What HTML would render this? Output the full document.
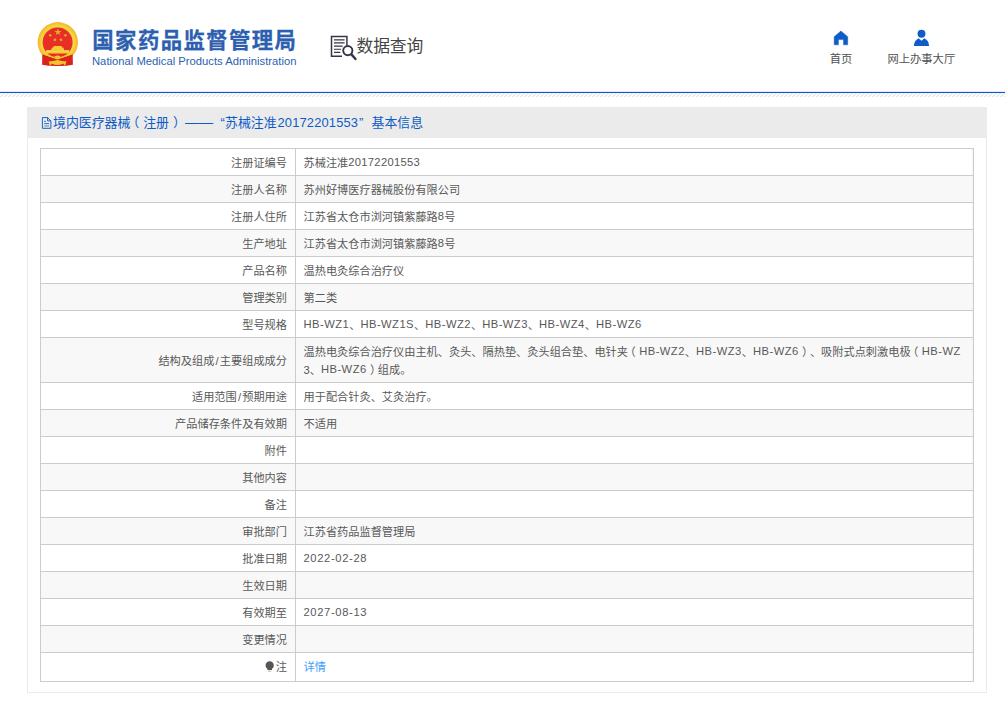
<!DOCTYPE html>
<html lang="zh-CN">
<head>
<meta charset="utf-8">
<title>国家药品监督管理局 数据查询</title>
<style>
html,body{margin:0;padding:0;background:#fff;}
body{width:1005px;height:705px;position:relative;overflow:hidden;
  font-family:"Liberation Sans","Noto Sans CJK SC",sans-serif;color:#333;text-spacing-trim:space-all;}
.abs{position:absolute;}
#hdr{position:absolute;left:0;top:0;width:1005px;height:92px;background:#fff;}
#blueline{position:absolute;left:0;top:92px;width:1005px;height:1px;background:#0c5dc2;box-shadow:0 -1px 0 rgba(12,93,194,0.12);}
#hatch{position:absolute;left:0;top:93px;width:1005px;height:4px;
  background:repeating-linear-gradient(135deg,#e8e8e8 0,#e8e8e8 0.9px,#fff 0.9px,#fff 2.828px);}
#cn{left:92.3px;top:23.5px;font-size:21.4px;font-weight:700;color:#2d5fb0;line-height:34px;white-space:nowrap;letter-spacing:1.4px;-webkit-text-stroke:0.3px #2d5fb0;}
#en{left:92px;top:54px;font-size:11.25px;color:#2d5fb0;line-height:14px;white-space:nowrap;}
#q{left:356.5px;top:34px;font-size:16.8px;color:#444;line-height:26px;white-space:nowrap;letter-spacing:-0.15px;}
.nav{font-size:11.3px;color:#505050;line-height:14px;white-space:nowrap;text-align:center;}
#panel{position:absolute;left:27px;top:107px;width:958px;height:585px;border:1px solid #eaeaea;border-top:none;box-sizing:content-box;}
#ptitle{position:absolute;left:27px;top:107px;width:960px;height:31px;background:#ebebeb;}
#ptxt{left:53px;top:114px;font-size:12.9px;color:#0d5bc6;line-height:18px;white-space:nowrap;width:400px;height:18px;}
#ptxt .t{position:absolute;top:0;white-space:nowrap;}
table{position:absolute;left:40px;top:148px;width:934px;border-collapse:collapse;table-layout:fixed;
  font-family:"Liberation Sans","Noto Sans CJK SC",sans-serif;font-size:11.2px;color:#585858;}
td{border:1px solid #ccc;height:27px;padding:1px 8px 0;line-height:18px;vertical-align:middle;box-sizing:border-box;}
td.l{width:255px;text-align:right;padding-right:8px;}
td.v{text-align:left;padding-left:7.5px;}
tr:nth-child(even) td{background:#f8f8f8;}
a{color:#409eff;text-decoration:none;}
tr.last td{padding-top:0;padding-bottom:1px;}
.sl{padding:0 1.2px;}
td.v{box-shadow:inset -1px 0 0 #f3f5fd;}
tr.last td.l{padding-right:8px;}
.h{letter-spacing:0.47px;position:relative;top:-1px;}
.pl{position:relative;left:-0.3em;}
.pr{position:relative;left:0.3em;}
.d{font-family:"Liberation Sans","Noto Sans CJK SC",sans-serif;letter-spacing:0.3px;position:relative;top:-1px;}
.dt{font-family:"Liberation Sans","Noto Sans CJK SC",sans-serif;letter-spacing:0.64px;position:relative;top:-1px;}
</style>
</head>
<body>
<div id="hdr">
  <svg class="abs" style="left:30px;top:16px" width="54" height="58" viewBox="30 16 54 58">
    <defs>
      <radialGradient id="rg" cx="57.8" cy="42.3" r="20.3" gradientUnits="userSpaceOnUse">
        <stop offset="0.72" stop-color="#e9c431"/><stop offset="0.78" stop-color="#f8d84a"/><stop offset="0.9" stop-color="#f5c530"/><stop offset="1" stop-color="#f2b52c"/>
      </radialGradient>
    </defs>
    <circle cx="57.8" cy="42.3" r="20.2" fill="url(#rg)"/>
    <path d="M42.3 54.3 L42.1 64.8 Q49 66.300 57.5 66.100 Q66 66.300 72.9 64.8 L72.700 54.3 Q57.5 61 42.3 54.3 Z" fill="#d9241b"/>
    <circle cx="57.6" cy="42.4" r="14.9" fill="#e92e26"/>
    <path d="M43.2 53.6 Q50 56.300 57.5 58.9 Q65 56.300 72 53.6" fill="none" stroke="#f3c52e" stroke-width="1.4"/>
    <path d="M54 57.600 Q54.5 55.6 57.5 55.5 Q60.5 55.6 61 57.600 Q59 58.6 57.5 58.400 Q56 58.6 54 57.600 Z" fill="#f3c52e"/>
    <path d="M48.7 61.5 Q53 61.400 57.5 60 Q62 61.400 66.6 61.5 L64.9 65.7 L63.1 63.4 L60.5 64.7 L57.5 65.1 L54.4 64.7 L51.8 63.4 L50 65.7 Z" fill="#f2c32e"/>
    <polygon points="57.90,28.40 58.77,30.90 61.42,30.96 59.31,32.56 60.07,35.09 57.90,33.58 55.73,35.09 56.49,32.56 54.38,30.96 57.03,30.90" fill="#d9b52a"/>
    <polygon points="51.15,33.65 51.02,34.93 52.06,35.70 50.80,35.97 50.40,37.19 49.75,36.08 48.46,36.07 49.32,35.11 48.93,33.89 50.11,34.40" fill="#dcb92b"/>
    <polygon points="64.45,33.65 65.49,34.40 66.67,33.89 66.28,35.11 67.14,36.07 65.85,36.08 65.20,37.19 64.80,35.97 63.54,35.70 64.58,34.93" fill="#dcb92b"/>
    <polygon points="55.39,37.96 55.60,39.23 56.80,39.70 55.65,40.29 55.58,41.57 54.67,40.67 53.42,41.00 54.00,39.85 53.31,38.77 54.58,38.96" fill="#dcb92b"/>
    <polygon points="60.51,37.96 61.32,38.96 62.59,38.77 61.90,39.85 62.48,41.00 61.23,40.67 60.32,41.57 60.25,40.29 59.10,39.70 60.30,39.23" fill="#dcb92b"/>
    <path d="M53.2 47.4 Q53.6 46.2 54.2 45.9 H61.2 Q61.8 46.2 62.2 47.4 H63.2 Q63.8 47.9 64.1 50.1 H69.1 L69.4 53.4 H46 L46.3 50.1 H51.2 Q51.500 47.900 52.200 47.400 Z" fill="#f6cb35"/>
    <path d="M46.200 51.300 H69.200" stroke="#f9de5a" stroke-width="0.7"/>
  </svg>
  <div id="cn" class="abs">国家药品监督管理局</div>
  <div id="en" class="abs">National Medical Products Administration</div>

  <svg class="abs" style="left:328px;top:32px" width="32" height="32" viewBox="328 32 32 32">
    <g fill="none" stroke="#35354a">
      <path d="M346.9 45.600 V36.500 H331.500 V56.300 H342" stroke-width="1.5"/>
      <path d="M334 39.9 H344.6 M334 42.9 H344.6 M334 46.100 H342.6 M334 49.200 H341 M334 52.400 H340.300" stroke-width="1.1"/>
      <circle cx="347.8" cy="50.600" r="4.6" stroke-width="1.9" fill="#fff"/>
      <path d="M351.400 54.400 L355.500 59" stroke-width="2.4" stroke-linecap="round"/>
    </g>
  </svg>
  <div id="q" class="abs">数据查询</div>

  <svg class="abs" style="left:832px;top:29px" width="18" height="18" viewBox="832 29 18 18">
    <path d="M840.9 31 L847.700 36.700 V44.800 H843.500 V39.6 H838.400 V44.800 H834.200 V36.700 Z" fill="#0f5cc8" stroke="#0f5cc8" stroke-width="0.5" stroke-linejoin="round"/>
  </svg>
  <div class="abs nav" style="left:811px;top:51.5px;width:60px;">首页</div>
  <svg class="abs" style="left:912px;top:28px" width="19" height="19" viewBox="912 28 19 19">
    <circle cx="921.5" cy="33.8" r="3.95" fill="#0f5cc8"/>
    <path d="M913.800 45.900 Q914.100 40.600 918.600 38.200 L921.500 40.700 L924.400 38.200 Q928.900 40.600 929.100 45.900 Z" fill="#0f5cc8"/>
  </svg>
  <div class="abs nav" style="left:871.3px;top:51.5px;width:100px;">网上办事大厅</div>
</div>
<div id="blueline"></div>
<div id="hatch"></div>

<div id="panel"></div>
<div id="ptitle"></div>
<svg class="abs" style="left:41px;top:116px" width="12" height="14" viewBox="0 0 12 14">
  <path d="M1.4 1.600 H6.600 L9.900 4.900 V12.300 H1.400 Z M6.600 1.600 V4.900 H9.900" fill="none" stroke="#0d5bc6" stroke-width="0.95"/>
  <path d="M3.200 5.300 H5 M3.200 7.600 H8.100" stroke="#0d5bc6" stroke-width="0.9"/>
  <path d="M3.200 9.200 H8.100 V10.600 H3.200 Z" fill="#7d9fd6"/>
</svg>
<div id="ptxt" class="abs"><span class="t" style="left:0">境内医疗器械<span class="pl">（</span>注册<span class="pr">）</span></span><span class="t" style="left:131.8px;transform:scaleX(1.09);transform-origin:0 0">——</span><span class="t" style="left:167.5px">“</span><span class="t" style="left:172px">苏械注准</span><span class="t" style="left:224.500px;letter-spacing:0.16px">20172201553</span><span class="t" style="left:306px">”</span><span class="t" style="left:318.5px">基本信息</span></div>

<table>
<tr><td class="l">注册证编号</td><td class="v">苏械注准<span class="d">20172201553</span></td></tr>
<tr><td class="l">注册人名称</td><td class="v">苏州好博医疗器械股份有限公司</td></tr>
<tr><td class="l">注册人住所</td><td class="v">江苏省太仓市浏河镇紫藤路<span class="d">8</span>号</td></tr>
<tr><td class="l">生产地址</td><td class="v">江苏省太仓市浏河镇紫藤路<span class="d">8</span>号</td></tr>
<tr><td class="l">产品名称</td><td class="v">温热电灸综合治疗仪</td></tr>
<tr><td class="l">管理类别</td><td class="v">第二类</td></tr>
<tr><td class="l">型号规格</td><td class="v"><span class="h">HB-WZ1</span>、<span class="h">HB-WZ1S</span>、<span class="h">HB-WZ2</span>、<span class="h">HB-WZ3</span>、<span class="h">HB-WZ4</span>、<span class="h">HB-WZ6</span></td></tr>
<tr style="height:45px"><td class="l">结构及组成<span class="sl">/</span>主要组成成分</td><td class="v">温热电灸综合治疗仪由主机、灸头、隔热垫、灸头组合垫、电针夹<span class="pl">（</span><span class="h">HB-WZ2</span>、<span class="h">HB-WZ3</span>、<span class="h">HB-WZ6</span><span class="pr">）</span>、吸附式点刺激电极<span class="pl">（</span><span class="h">HB-WZ</span><br>3、<span class="h">HB-WZ6</span><span class="pr">）</span>组成。</td></tr>
<tr><td class="l">适用范围<span class="sl">/</span>预期用途</td><td class="v">用于配合针灸、艾灸治疗。</td></tr>
<tr><td class="l">产品储存条件及有效期</td><td class="v">不适用</td></tr>
<tr><td class="l">附件</td><td class="v"></td></tr>
<tr><td class="l">其他内容</td><td class="v"></td></tr>
<tr><td class="l">备注</td><td class="v"></td></tr>
<tr><td class="l">审批部门</td><td class="v">江苏省药品监督管理局</td></tr>
<tr><td class="l">批准日期</td><td class="v"><span class="dt">2022-02-28</span></td></tr>
<tr><td class="l">生效日期</td><td class="v"></td></tr>
<tr><td class="l">有效期至</td><td class="v"><span class="dt">2027-08-13</span></td></tr>
<tr><td class="l">变更情况</td><td class="v"></td></tr>
<tr style="height:29px" class="last"><td class="l"><svg width="9.4" height="11.4" viewBox="0 0 9 11" style="vertical-align:-2px;margin-right:1.7px"><path d="M4.5 0.3 A4 4 0 0 0 2.3 7.6 V8.6 H6.700 V7.600 A4 4 0 0 0 4.5 0.3 Z" fill="#555"/><path d="M3 9.300 H6 V10.2 H3 Z" fill="#c9a26a"/></svg>注</td><td class="v"><a>详情</a></td></tr>
</table>
</body>
</html>
